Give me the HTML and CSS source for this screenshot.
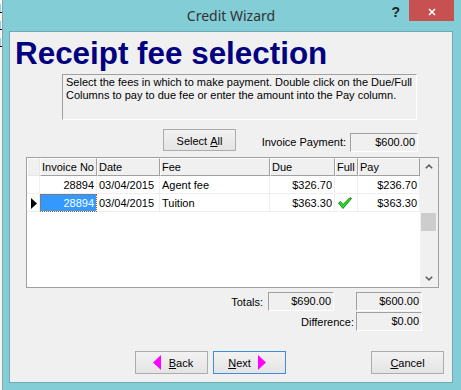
FILE: index.html
```html
<!DOCTYPE html>
<html lang="en">
<head>
    <meta charset="UTF-8">
    <title>Credit Wizard</title>
    <link rel="stylesheet" href="styles.css">
</head>
<body>
    <div class="behind"><div class="behind-text">1<br>1<br>1</div></div>

    <div class="window">
        <div class="titlebar">
            <div></div>
            <div class="title">Credit Wizard</div>
            <div class="controls">
                <span class="help">?</span>
                <span class="close">
                    <svg width="8" height="8" viewBox="0 0 8 8"><path d="M1 1 L7 7 M7 1 L1 7" stroke="#fff" stroke-width="1.6"/></svg>
                </span>
            </div>
        </div>

        <div class="client">
            <h1>Receipt fee selection</h1>

            <div class="info">Select the fees in which to make payment. Double click on the Due/Full<br>Columns to pay to due fee or enter the amount into the Pay column.</div>

            <div class="pay-row">
                <button class="btn select-all">Select&nbsp;<u>A</u>ll</button>
                <span class="pay-label">Invoice Payment:</span>
                <span class="field">$600.00</span>
            </div>

            <div class="grid">
                <div class="table">
                    <!-- header -->
                    <div class="th ind"></div>
                    <div class="th">Invoice No</div>
                    <div class="th">Date</div>
                    <div class="th">Fee</div>
                    <div class="th">Due</div>
                    <div class="th">Full</div>
                    <div class="th">Pay</div>

                    <!-- row 1 -->
                    <div class="td ind"></div>
                    <div class="td num">28894</div>
                    <div class="td">03/04/2015</div>
                    <div class="td">Agent fee</div>
                    <div class="td num">$326.70</div>
                    <div class="td"></div>
                    <div class="td num">$236.70</div>

                    <!-- row 2 (current) -->
                    <div class="td ind">
                        <svg width="6" height="11" viewBox="0 0 6 11"><polygon points="0,0 6,5.5 0,11" fill="#000"/></svg>
                    </div>
                    <div class="td num sel">28894</div>
                    <div class="td">03/04/2015</div>
                    <div class="td">Tuition</div>
                    <div class="td num">$363.30</div>
                    <div class="td check">
                        <svg width="14" height="12" viewBox="0 0 14 12"><polygon points="0.5,6 2.5,4.5 5,7.5 12,0.5 13.5,1.5 5,11.5" fill="#1ee81e" stroke="#0b5e0b" stroke-width="0.8"/></svg>
                    </div>
                    <div class="td num">$363.30</div>
                </div>

                <div class="scrollbar">
                    <span class="sb-btn">
                        <svg width="8" height="5" viewBox="0 0 8 5"><path d="M0.8 4.3 L4 1.2 L7.2 4.3" fill="none" stroke="#606060" stroke-width="1.6"/></svg>
                    </span>
                    <span class="track"><span class="thumb"></span></span>
                    <span class="sb-btn">
                        <svg width="8" height="5" viewBox="0 0 8 5"><path d="M0.8 0.7 L4 3.8 L7.2 0.7" fill="none" stroke="#606060" stroke-width="1.6"/></svg>
                    </span>
                </div>
            </div>

            <div class="totals-row first">
                <span class="totals-label">Totals:</span>
                <span class="field">$690.00</span>
                <span class="field spaced">$600.00</span>
            </div>
            <div class="totals-row">
                <span class="diff-label">Difference:</span>
                <span class="field">$0.00</span>
            </div>

            <div class="nav">
                <button class="btn nav-btn back">
                    <svg width="8" height="15" viewBox="0 0 8 15"><polygon points="8,0 8,15 0,7.5" fill="#ff00ff"/></svg>
                    <span><u>B</u>ack</span>
                </button>
                <button class="btn nav-btn next">
                    <span><u>N</u>ext</span>
                    <svg width="8" height="15" viewBox="0 0 8 15"><polygon points="0,0 8,7.5 0,15" fill="#ff00ff"/></svg>
                </button>
                <button class="btn nav-btn cancel"><span><u>C</u>ancel</span></button>
            </div>
        </div>
    </div>
</body>
</html>
```

FILE: styles.css
```css
* {
    box-sizing: border-box;
}

body {
    margin: 0;
    display: flex;
    height: 390px;
    overflow: hidden;
    background-color: #f6f6f1;
    font-family: "Liberation Sans", Arial, sans-serif;
    font-size: 11px;
    color: #000;
}

/* window lying behind the dialog */
.behind {
    width: 2px;
    flex-shrink: 0;
    overflow: hidden;
    padding-top: 1px;
}

.behind-text {
    margin-left: -4px;
    width: 10px;
    font-size: 12px;
    line-height: 17px;
}

.window {
    width: 459px;
    height: 390px;
    flex-shrink: 0;
    background-color: #82cdd6;
    border-left: 1px solid #8fa3a6;
    padding: 0 8px 7px 6px;
    display: flex;
    flex-direction: column;
}

.titlebar {
    height: 31px;
    display: grid;
    grid-template-columns: 1fr auto 1fr;
    align-items: start;
}

.title {
    padding-top: 6px;
    font-family: "Noto Sans", sans-serif;
    font-size: 14px;
    line-height: 19px;
    color: #333;
}

.controls {
    display: flex;
    justify-content: flex-end;
    align-items: flex-start;
    margin-right: -1px;
}

.help {
    margin-top: 4px;
    margin-right: 9px;
    font-weight: bold;
    font-size: 14px;
    line-height: 16px;
    color: #222;
}

.close {
    width: 45px;
    height: 21px;
    padding-top: 2px;
    background-color: #c75050;
    display: flex;
    justify-content: center;
    align-items: center;
}

.client {
    height: 352px;
    background-color: #f0f0f0;
    border: 1px solid #6fa9b2;
    display: flex;
    flex-direction: column;
}

h1 {
    margin: 6px 0 0;
    padding-left: 5px;
    font-size: 31.4px;
    line-height: 32px;
    font-weight: bold;
    color: #000080;
    white-space: nowrap;
}

.info {
    margin: 4px 0 0 52px;
    width: 355px;
    height: 46px;
    padding: 1px 3px;
    border: 1px solid;
    border-color: #a0a0a0 #fff #fff #a0a0a0;
    line-height: 13px;
    white-space: nowrap;
}

.pay-row {
    display: flex;
    align-items: flex-start;
    margin-top: 9px;
    padding: 0 34px 0 153px;
}

.btn {
    font-family: inherit;
    font-size: 11px;
    color: #000;
    width: 73px;
    padding: 0;
    border: 1px solid #acacac;
    background: linear-gradient(#f2f2f2, #e4e4e4);
    display: flex;
    justify-content: center;
    align-items: center;
}

.select-all {
    height: 22px;
    padding-top: 1px;
}

.pay-label {
    margin: 4px 4px 0 auto;
    line-height: 19px;
}

.field {
    width: 66px;
    height: 19px;
    padding-right: 2px;
    border: 1px solid;
    border-color: #a0a0a0 #fff #fff #a0a0a0;
    line-height: 17px;
    text-align: right;
}

.pay-row .field {
    width: 68px;
    margin-top: 4px;
}

/* fee list */
.grid {
    margin: 5px 0 0 16px;
    width: 413px;
    height: 131px;
    border: 1px solid #a0a0a0;
    background-color: #fff;
    display: flex;
}

.table {
    width: 393px;
    display: grid;
    grid-template-columns: 13px 57px 63px 110px 65px 23px 62px;
    grid-auto-rows: 18px;
    align-content: start;
}

.th {
    background-color: #f0f0f0;
    border-top: 1px solid #fff;
    border-left: 1px solid #fff;
    border-right: 1px solid #a0a0a0;
    border-bottom: 1px solid #a0a0a0;
    padding: 1px 0 0 1px;
    line-height: 15px;
    white-space: nowrap;
    overflow: hidden;
}

.th.ind {
    border-right-color: #e6e6e6;
    border-bottom-color: #e6e6e6;
}

.td {
    border-right: 1px solid #efefef;
    border-bottom: 1px solid #efefef;
    padding: 2px 2px 0;
    line-height: 15px;
    white-space: nowrap;
    overflow: hidden;
}

.td.num {
    text-align: right;
}

.td.ind {
    padding: 4px 0 0 4px;
}

.td.ind svg {
    display: block;
}

.td.sel {
    background-color: #3399ff;
    color: #fff;
    outline: 1px dotted #b8601a;
    outline-offset: -1px;
}

.td.check {
    padding: 3px 0 0 3px;
}

.td.check svg {
    display: block;
}

.scrollbar {
    width: 18px;
    background-color: #f0f0f0;
    display: flex;
    flex-direction: column;
}

.sb-btn {
    height: 17px;
    display: flex;
    justify-content: center;
    align-items: center;
    padding-right: 1px;
}

.track {
    flex: 1;
}

.thumb {
    display: block;
    margin: 38px 0 0 1px;
    width: 15px;
    height: 18px;
    background-color: #cdcdcd;
}

/* totals */
.totals-row {
    display: flex;
    justify-content: flex-end;
    align-items: center;
    padding-right: 30px;
    margin-top: 1px;
}

.totals-row.first {
    margin-top: 4px;
}

.totals-label {
    margin-right: 5px;
}

.diff-label {
    margin-right: 2px;
}

.field.spaced {
    margin-left: 22px;
}

/* wizard buttons */
.nav {
    display: flex;
    gap: 5px;
    margin-top: 20px;
    padding: 0 8px 0 125px;
}

.nav-btn {
    height: 23px;
    gap: 8px;
}

.nav-btn.back {
    padding-left: 3px;
}

.nav-btn.next {
    gap: 7px;
    padding-right: 5px;
    border-color: #3d8ee0;
}

.nav-btn.cancel {
    margin-left: auto;
}
```
